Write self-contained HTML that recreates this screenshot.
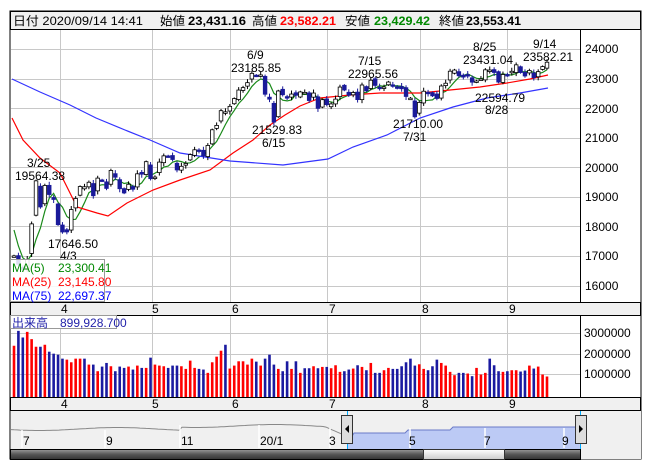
<!DOCTYPE html>
<html><head><meta charset="utf-8"><style>
body{margin:0;background:#fff;width:652px;height:469px;overflow:hidden;font-family:"Liberation Sans","Noto Sans CJK JP",sans-serif}
svg{position:absolute;left:0;top:0}
text{font-family:"Liberation Sans","Noto Sans CJK JP",sans-serif;font-size:12px;fill:#000}
</style></head><body>
<svg id="s" width="652" height="469" viewBox="0 0 652 469">
<rect x="10" y="11" width="631" height="448" fill="#fff" stroke="#000"/>
<rect x="10.5" y="11.5" width="630" height="18" fill="#f0f0f0" stroke="#000"/>
<g id="grid" stroke="#c8c8c8" stroke-width="1"></g>
<g id="ma"></g>
<g id="candles"></g>
<g id="vol"></g>
<!-- header -->
<text x="13" y="25" font-size="13" textLength="130" lengthAdjust="spacingAndGlyphs">日付 2020/09/14 14:41</text>
<text x="160" y="25" font-size="13" textLength="25" lengthAdjust="spacingAndGlyphs">始値</text>
<text x="188" y="25" font-size="13" font-weight="bold" textLength="58" lengthAdjust="spacingAndGlyphs">23,431.16</text>
<text x="252" y="25" font-size="13" textLength="25" lengthAdjust="spacingAndGlyphs">高値</text>
<text x="280" y="25" font-size="13" font-weight="bold" style="fill:#f00" textLength="56" lengthAdjust="spacingAndGlyphs">23,582.21</text>
<text x="345" y="25" font-size="13" textLength="25" lengthAdjust="spacingAndGlyphs">安値</text>
<text x="374" y="25" font-size="13" font-weight="bold" style="fill:#080" textLength="56" lengthAdjust="spacingAndGlyphs">23,429.42</text>
<text x="439" y="25" font-size="13" textLength="25" lengthAdjust="spacingAndGlyphs">終値</text>
<text x="466" y="25" font-size="13" font-weight="bold" textLength="55" lengthAdjust="spacingAndGlyphs">23,553.41</text>
<!-- right axis -->
<line x1="580.5" y1="30" x2="580.5" y2="448" stroke="#000"/>
<g font-size="12">
<text x="585" y="53">24000</text><text x="585" y="83">23000</text><text x="585" y="113">22000</text>
<text x="585" y="142">21000</text><text x="585" y="172">20000</text><text x="585" y="201">19000</text>
<text x="585" y="231">18000</text><text x="585" y="260">17000</text><text x="585" y="290">16000</text>
<text x="584" y="337">3000000</text><text x="584" y="358">2000000</text><text x="584" y="378">1000000</text>
</g>
<!-- date rows -->
<rect x="10.5" y="302.5" width="630" height="13" fill="#f0f0f0" stroke="#000"/>
<rect x="10.5" y="397.5" width="630" height="13" fill="#f0f0f0" stroke="#000"/>
<g font-size="11">
<text x="61" y="313">4</text><text x="152" y="313">5</text><text x="232" y="313">6</text><text x="329" y="313">7</text><text x="422" y="313">8</text><text x="509" y="313">9</text>
<text x="61" y="408">4</text><text x="152" y="408">5</text><text x="232" y="408">6</text><text x="329" y="408">7</text><text x="422" y="408">8</text><text x="509" y="408">9</text>
</g>
<!-- annotations -->
<g font-size="12">
<text x="247" y="59">6/9</text><text x="231" y="72">23185.85</text>
<text x="358" y="65">7/15</text><text x="348" y="78">22965.56</text>
<text x="473" y="51">8/25</text><text x="463" y="64">23431.04</text>
<text x="533" y="48">9/14</text><text x="523" y="61">23582.21</text>
<text x="475" y="102">22594.79</text><text x="485" y="114">8/28</text>
<text x="393" y="128">21710.00</text><text x="403" y="141">7/31</text>
<text x="252" y="134">21529.83</text><text x="262" y="147">6/15</text>
<text x="27" y="167">3/25</text><text x="15" y="180">19564.38</text>
<text x="48" y="248">17646.50</text><text x="60" y="260">4/3</text>
</g>
<!-- legend -->
<rect x="10.5" y="259.5" width="94" height="42" fill="#fff" fill-opacity="0.85" stroke="#999"/>
<g font-size="12">
<text x="12" y="272" style="fill:#080">MA(5)</text><text x="58" y="272" style="fill:#080">23,300.41</text>
<text x="12" y="286" style="fill:#f00">MA(25)</text><text x="58" y="286" style="fill:#f00">23,145.80</text>
<text x="12" y="300" style="fill:#00f">MA(75)</text><text x="58" y="300" style="fill:#00f">22,697.37</text>
</g>
<rect x="10.5" y="315.5" width="106" height="13" fill="#fff" stroke="#999"/>
<text x="12" y="327" style="fill:#22a" font-size="12">出来高　899,928.700</text>
<!-- navigator -->
<rect x="11" y="411" width="569" height="38" fill="#f0f0f0"/>
<rect x="581" y="411" width="60" height="48" fill="#f0f0f0"/>
<polygon id="navsel" fill="#bccaf5" points=""/>
<polyline id="navl1" fill="none" stroke="#888" stroke-width="1"/>
<polyline id="navl2" fill="none" stroke="#6a7ac8" stroke-width="1"/>
<g stroke="#fff" stroke-width="1.5">
<line x1="22" y1="430" x2="22" y2="448"/><line x1="105" y1="430" x2="105" y2="448"/><line x1="180" y1="425" x2="180" y2="448"/><line x1="259" y1="425" x2="259" y2="448"/><line x1="330" y1="428" x2="330" y2="448"/><line x1="410" y1="428" x2="410" y2="448"/><line x1="485" y1="428" x2="485" y2="448"/><line x1="564" y1="428" x2="564" y2="448"/>
</g>
<g font-size="11"><text x="23" y="445">7</text><text x="106" y="445">9</text><text x="181" y="445">11</text><text x="260" y="445">20/1</text><text x="329" y="445">3</text><text x="409" y="445">5</text><text x="484" y="445">7</text><text x="562" y="445">9</text></g>
<line x1="347.5" y1="411" x2="347.5" y2="449" stroke="#0af"/>
<line x1="580.5" y1="411" x2="580.5" y2="449" stroke="#0af"/>
<rect x="341.5" y="415.5" width="11" height="28" fill="#ddd" stroke="#333"/>
<polygon points="345,429 349,425 349,433" fill="#000"/>
<rect x="575.5" y="415.5" width="11" height="28" fill="#ddd" stroke="#333"/>
<polygon points="583,429 579,425 579,433" fill="#000"/>
<defs><linearGradient id="sb" x1="0" y1="0" x2="0" y2="1"><stop offset="0" stop-color="#999"/><stop offset="0.5" stop-color="#555"/><stop offset="1" stop-color="#333"/></linearGradient>
<linearGradient id="th" x1="0" y1="0" x2="0" y2="1"><stop offset="0" stop-color="#fff"/><stop offset="1" stop-color="#ccc"/></linearGradient></defs>
<rect x="10.5" y="449.5" width="570" height="10" fill="url(#sb)" stroke="#000"/>
<rect x="423.5" y="449.5" width="81" height="10" fill="url(#th)" stroke="#333"/>
</svg>
<script>
var NS="http://www.w3.org/2000/svg";
function el(p,t,a){var e=document.createElementNS(NS,t);for(var k in a)e.setAttribute(k,a[k]);p.appendChild(e);return e;}
var G=document.getElementById('grid');
[49,79,108,138,167,197,226,256,286].forEach(function(y){el(G,'line',{x1:11,x2:580,y1:y+.5,y2:y+.5});});
[333,354,374].forEach(function(y){el(G,'line',{x1:11,x2:580,y1:y+.5,y2:y+.5});});
[60,152,230,327,420,507].forEach(function(x){el(G,'line',{x1:x+.5,x2:x+.5,y1:30,y2:302});el(G,'line',{x1:x+.5,x2:x+.5,y1:316,y2:397});});
var C=[19867,19416,18559,17431,17002,17011,16726,16552,16887,18092,19546,18664,19389,19084,18917,18065,17818,17820,18576,18950,19353,19345,19498,19043,19638,19550,19290,19897,19669,19280,19137,19429,19262,19783,19771,20193,19619,19674,20179,20390,20366,20267,19914,20037,20133,20433,20595,20552,20388,20741,21271,21419,21916,21877,22062,22325,22613,22695,22863,23178,23091,23124,22472,22305,21530,22582,22455,22355,22478,22437,22549,22534,22259,22512,21995,22288,22122,22145,22306,22714,22614,22438,22529,22291,22784,22587,22945,22770,22696,22717,22884,22751,22715,22657,22397,22339,21710,22195,22573,22514,22418,22329,22750,22843,23250,23289,23096,23051,23110,22880,22920,22985,23296,23290,23208,22882,23139,23138,23247,23465,23205,23089,23274,23032,23235,23406,23553];
var V=[288,243,263,246,268,291,291,285,306,312,315,327,330,338,327,327,327,345,345,365,351,340,350,365,351,355,351,360,348,355,355,324,345,348,350,355,348,348,350,358,333,355,358,360,370,338,321,303,285,357,348,335,335,345,327,336,348,327,315,345,358,365,335,358,335,370,356,356,350,356,352,352,356,347,367,365,360,357,347,352,362,340,370,370,362,355,358,358,350,338,327,348,344,358,362,350,330,340,348,367,377,370,370,372,380,355,375,370,327,347,365,367,365,362,362,366,363,348,357,351,375];
function Y(p){return 49+(24000-p)*0.0296;}
var st=5,N=C.length,dx=(547-14)/(N-1-st);
function X(i){return 14+(i-st)*dx;}
var cg=document.getElementById('candles'),vg=document.getElementById('vol'),ma=document.getElementById('ma');
var m5=[];
for(var i=st;i<N;i++){
 var c=C[i],pc=C[i-1],o=pc+(c-pc)*0.15+((i*37)%7-3)*25;
 var up=c>=o,x=X(i);
 var hi=Math.max(o,c)+40+((i*13)%5)*20,lo=Math.min(o,c)-40-((i*11)%5)*20;
 el(cg,'line',{x1:x,x2:x,y1:Y(hi),y2:Y(lo),stroke:up?'#000':'#1a1a9a'});
 var t=Y(Math.max(o,c)),h=Math.max(1.5,Math.abs(Y(o)-Y(c)));
 el(cg,'rect',{x:x-1.8,y:t,width:3.6,height:h,fill:up?'#fff':'#1a1a9a',stroke:up?'#000':'#1a1a9a','stroke-width':0.8});
 var vi=i-st;var vv=(V[vi]!==undefined)?(443-V[vi])/62:1;
 var vc=(c>=pc)?'#f00':'#1a1aa0';
 el(vg,'rect',{x:x-1.3,y:397-vv*20.5,width:2.6,height:vv*20.5,fill:vc});
 var s=0;for(var k=0;k<5;k++)s+=C[i-k];m5.push(X(i).toFixed(1)+','+Y(s/5).toFixed(1));
}
el(ma,'polyline',{points:m5.join(' '),fill:'none',stroke:'#1a8a1a','stroke-width':1.2});
el(ma,'polyline',{points:'12,118 23,140 40,158 60,173 77,207 97,213 108,216 127,203 153,190 180,180 210,170 233,153 253,140 270,125 285,115 300,106 320,98 350,95 380,93 420,93 450,90 480,87 507,83 530,79 548,75',fill:'none',stroke:'#f00','stroke-width':1.2});
el(ma,'polyline',{points:'12,79 40,92 70,105 96,118 125,130 150,140 180,153 230,161 283,165 328,159 353,147 387,135 420,118 453,107 487,98 520,93 548,88',fill:'none',stroke:'#33f','stroke-width':1.2});
var p1=[],p2=[];
for(var x=11;x<=347;x+=3){var y=430+Math.sin(x/25)*1.5-(x>180?3:0)-((x*7)%3)*0.5;if(x>325)y+=(x-325)*0.4;p1.push(x+','+y.toFixed(1));}
var sel=['348,449'];
for(var x=348;x<=580;x+=3){var y=(x<352?438:433)-((x>405)?3:0)-((x>450)?3:0)+((x*7)%3)*0.6;p2.push(x+','+y.toFixed(1));sel.push(x+','+y.toFixed(1));}
sel.push('580,449');
document.getElementById('navl1').setAttribute('points',p1.join(' '));
document.getElementById('navl2').setAttribute('points',p2.join(' '));
document.getElementById('navsel').setAttribute('points',sel.join(' '));
</script>
</body></html>
